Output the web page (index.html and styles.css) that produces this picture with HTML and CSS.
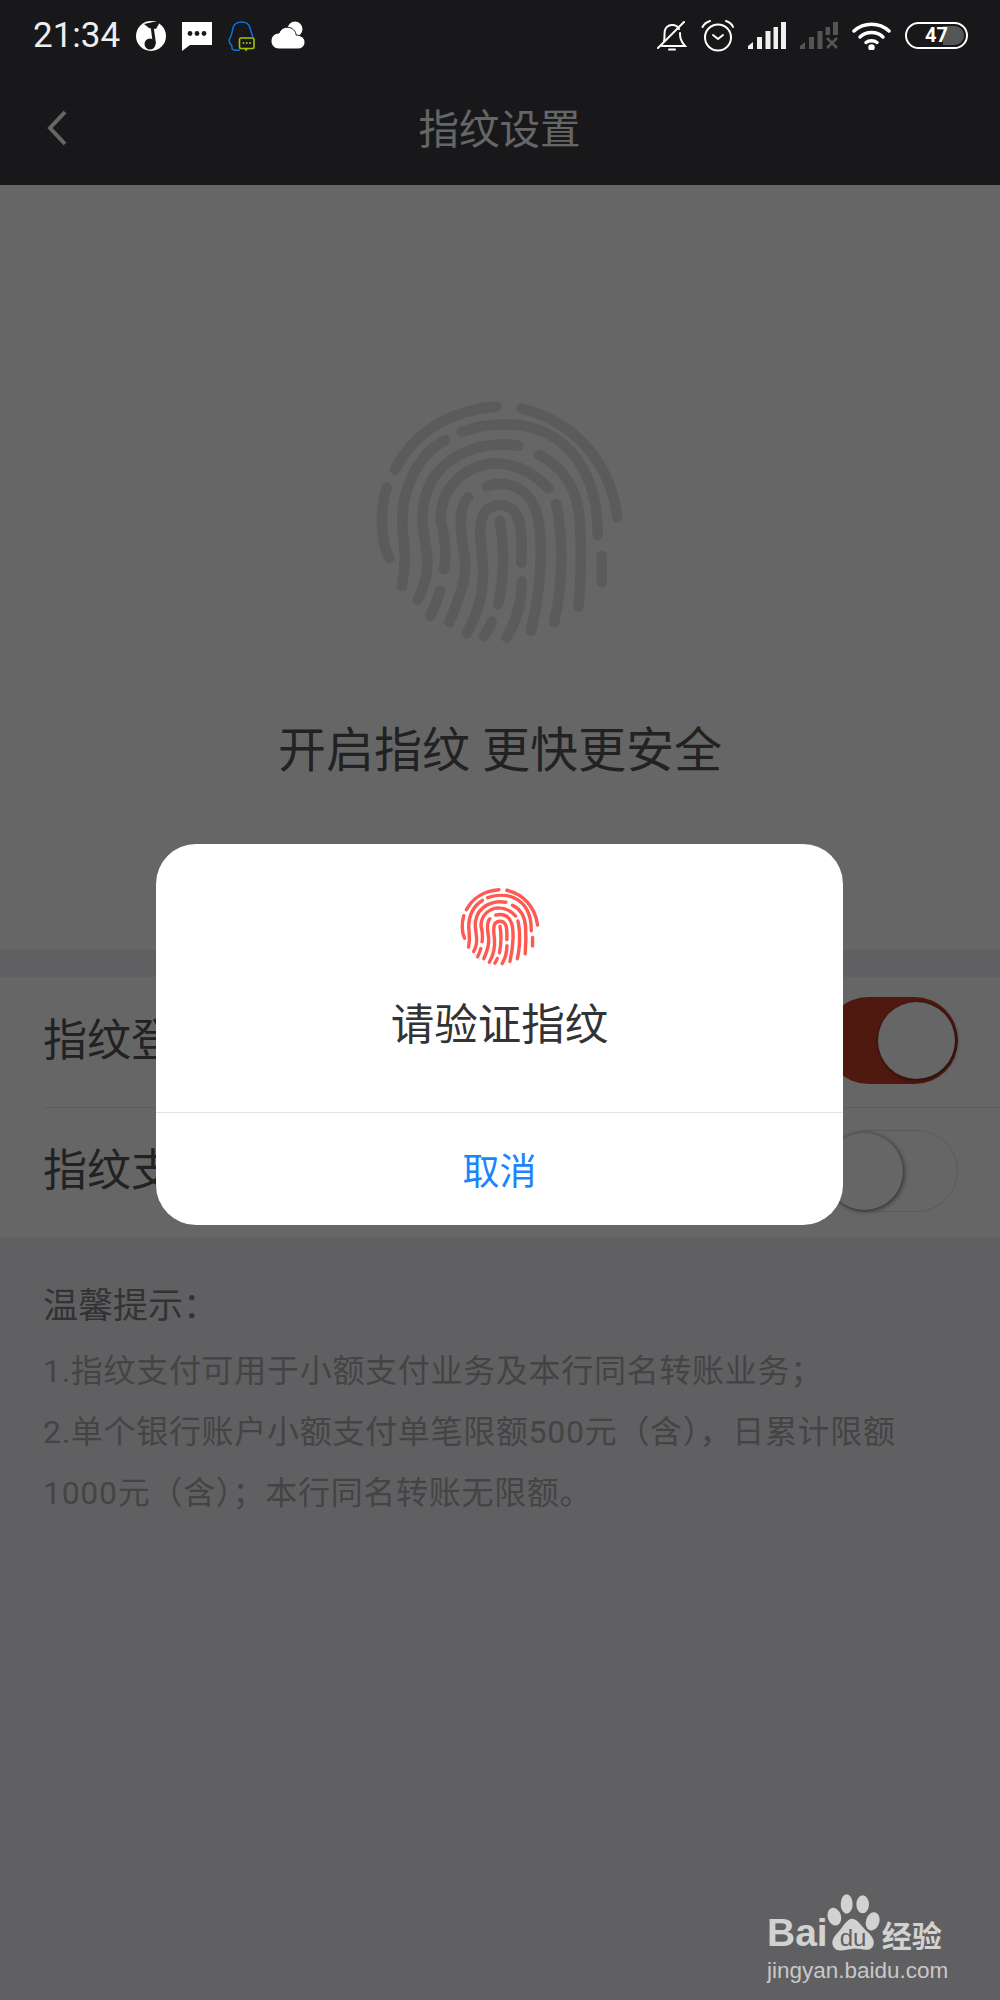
FILE: index.html
```html
<!DOCTYPE html>
<html lang="zh-CN">
<head>
    <meta charset="UTF-8">
    <title>指纹设置</title>
    <link rel="stylesheet" href="styles.css">
</head>
<body>
<svg class="defs" width="0" height="0">
    <symbol id="finger" viewBox="0 0 900 840">
        <g fill="none" stroke="currentColor" stroke-width="32" stroke-linecap="round" stroke-linejoin="round">
            <path d="M135 268C190 160 300 90 440 80"/>
            <path d="M515 85C670 125 780 240 802 412"/>
            <path d="M110 323C90 390 90 480 118 535"/>
            <path d="M335 155C420 125 520 125 590 160C690 210 745 320 743 465"/>
            <path d="M285 180C205 225 155 320 157 430C158 480 175 530 155 618"/>
            <path d="M505 197C430 185 350 200 290 250C235 295 215 360 218 430C222 490 240 520 228 590C222 620 212 640 203 660"/>
            <path d="M567 225C640 260 685 330 690 430C695 520 692 610 686 680"/>
            <path d="M595 325C545 270 490 250 430 250C350 255 270 320 272 420C285 470 290 520 282 568"/>
            <path d="M270 632C262 660 252 685 240 708"/>
            <path d="M410 318C470 300 530 320 555 385C580 450 580 600 543 752"/>
            <path d="M515 605C515 670 495 730 470 772"/>
            <path d="M618 372C640 460 640 620 612 727"/>
            <path d="M355 352C325 380 332 440 336 480C345 530 355 570 330 640C320 675 310 700 298 727"/>
            <path d="M350 760C390 690 405 620 398 540C392 490 385 450 397 410C410 370 480 355 505 415C518 450 515 500 514 548"/>
            <path d="M450 423C460 480 465 570 445 672"/>
            <path d="M425 725C418 742 410 755 402 768"/>
            <path d="M755 528V607"/>
        </g>
    </symbol>
</svg>

<div class="status">
    <div class="status_left">
        <span class="time">21:34</span>
        <svg width="30" height="30" viewBox="0 0 30 30">
            <circle cx="15" cy="15" r="15" fill="#fff"/>
            <path d="M8 3L17 1L24 1L20 8L13 7Z" fill="#18181a"/>
            <path d="M16 5L18.500 23" fill="none" stroke="#18181a" stroke-width="3"/>
            <circle cx="14" cy="23" r="5.500" fill="#18181a"/>
        </svg>
        <svg width="30" height="30" viewBox="0 0 30 30">
            <path d="M0 1H30V24H8L0 30Z" fill="#fff"/>
            <circle cx="8" cy="12.500" r="2.400" fill="#18181a"/>
            <circle cx="15" cy="12.500" r="2.400" fill="#18181a"/>
            <circle cx="22" cy="12.500" r="2.400" fill="#18181a"/>
        </svg>
        <svg width="27" height="32" viewBox="0 0 27 32">
            <path d="M12 30C6 31 3 30 4 26C1 23 0 21 2 18C4 15 4 12 5 8C7 0 20 0 22 8C23 12 24 14 25 17" fill="none" stroke="#0a72e8" stroke-width="1.500"/>
            <rect x="11.500" y="18" width="14.500" height="10.500" rx="1.500" fill="#18181a" stroke="#a4c400" stroke-width="1.600"/>
            <path d="M16 28.500L18 31.500L20 28.500" fill="#a4c400"/>
            <circle cx="15.500" cy="23" r="1" fill="#a4c400"/>
            <circle cx="18.800" cy="23" r="1" fill="#a4c400"/>
            <circle cx="22" cy="23" r="1" fill="#a4c400"/>
        </svg>
        <svg width="34" height="29" viewBox="0 0 34 29">
            <circle cx="24" cy="8" r="7.500" fill="#fff"/>
            <path d="M8 28C3 28 0 24 0 20C0 15 4 12 8 12C10 7 15 5 20 7C24 9 25 12 25 14C30 14 34 17 34 21C34 25 31 28 27 28Z" fill="#fff" stroke="#18181a" stroke-width="1"/>
        </svg>
    </div>
    <div class="status_right">
        <svg width="30" height="30" viewBox="0 0 30 30" fill="none" stroke="#fff" stroke-width="2" stroke-linecap="round">
            <path d="M7 20C8 17 7 12 8 9C10 3 19 2 22 8"/>
            <path d="M23 12C23 16 23 19 28 25H5"/>
            <path d="M12 28.500H18"/>
            <path d="M1 27L27 1"/>
        </svg>
        <svg width="33" height="32" viewBox="0 0 33 32" fill="none" stroke="#fff" stroke-width="2" stroke-linecap="round" stroke-linejoin="round">
            <circle cx="17" cy="17.500" r="13"/>
            <path d="M12 15L17 19L22 15"/>
            <path d="M1.500 7C3 4 6 2 9 1"/>
            <path d="M25 1C28 2 31 4 32 7"/>
        </svg>
        <svg width="38" height="27" viewBox="0 0 38 27" fill="#f0f0f0">
            <path d="M0 27V24L5 20V27Z"/>
            <rect x="9" y="15" width="5" height="12"/>
            <rect x="17.500" y="9" width="5" height="18"/>
            <rect x="25.500" y="5" width="4.500" height="22"/>
            <rect x="33" y="0" width="5" height="27"/>
        </svg>
        <svg width="38" height="27" viewBox="0 0 38 27" fill="#555">
            <path d="M0 27V24L5 20V27Z"/>
            <rect x="9" y="15" width="5" height="12"/>
            <rect x="17.500" y="9" width="5" height="18"/>
            <rect x="25.500" y="5" width="4.500" height="8"/>
            <rect x="33" y="0" width="5" height="13"/>
            <path d="M27 16L37 26M37 16L27 26" stroke="#555" stroke-width="2.500"/>
        </svg>
        <svg width="39" height="28" viewBox="0 0 39 28" fill="none" stroke="#fff" stroke-width="3.500" stroke-linecap="round">
            <path d="M2 9C12 0 27 0 37 9"/>
            <path d="M8 15C14 9 25 9 31 15"/>
            <path d="M14 20.500C17 18 22 18 25 20.500"/>
            <circle cx="19.500" cy="25.500" r="1.500" fill="#fff"/>
        </svg>
        <div class="battery">47</div>
    </div>
</div>

<div class="nav">
    <svg class="back" width="20" height="36" viewBox="0 0 20 36">
        <path d="M18 2L3 18L18 34" fill="none" stroke="#fff" stroke-width="4"/>
    </svg>
    <div class="nav_title">指纹设置</div>
    <div></div>
</div>

<div class="hero">
    <svg class="hero_icon" width="300" height="280"><use href="#finger"/></svg>
    <div class="hero_text">开启指纹 更快更安全</div>
</div>

<div class="band"></div>

<div class="rows">
    <div class="row">
        <span class="row_text">指纹登录</span>
        <div class="switch on"><span class="knob"></span></div>
    </div>
    <div class="row">
        <span class="row_text">指纹支付</span>
        <div class="switch"><span class="knob"></span></div>
    </div>
</div>

<div class="notes">
    <div class="notes_title">温馨提示<span class="pt">：</span></div>
    <p>1.指纹支付可用于小额支付业务及本行同名转账业务；</p>
    <p>2.单个银行账户小额支付单笔限额500元（含），日累计限额1000元（含）；本行同名转账无限额。</p>
</div>

<div class="mask"></div>

<div class="dialog">
    <div class="dialog_top">
        <svg class="dialog_icon" width="96" height="90"><use href="#finger"/></svg>
        <div class="dialog_title">请验证指纹</div>
    </div>
    <div class="dialog_btn">取消</div>
</div>

<div class="mark">
    <div class="mark_top">
        <span class="mark_bai">Bai</span>
        <svg class="mark_paw" width="58" height="60" viewBox="0 0 174 180">
            <ellipse cx="31" cy="68" rx="20" ry="27" transform="rotate(-18 31 68)" fill="#d2d2d2"/>
            <ellipse cx="68" cy="30" rx="18" ry="29" fill="#d2d2d2"/>
            <ellipse cx="116" cy="31" rx="19" ry="27" fill="#d2d2d2"/>
            <ellipse cx="146" cy="82" rx="20" ry="28" transform="rotate(18 146 82)" fill="#d2d2d2"/>
            <path d="M74 78C92 66 106 88 124 108C144 124 156 142 146 158C134 176 108 162 88 164C64 166 40 178 28 158C18 138 36 122 48 108C56 98 62 86 74 78Z" fill="#d2d2d2"/>
            <text x="87" y="156" text-anchor="middle" class="mark_du">du</text>
        </svg>
        <span class="mark_jy">经验</span>
    </div>
    <div class="mark_url">jingyan.baidu.com</div>
</div>
</body>
</html>
```

FILE: styles.css
```css
*{
    margin: 0;
    padding: 0;
    box-sizing: border-box;
}
body{
    position: relative;
    width: 1000px;
    height: 2000px;
    overflow: hidden;
    background-color: #f0f0f5;
    font-family: Roboto, "Noto Sans CJK SC", sans-serif;
}
.defs{
    position: absolute;
}

/* status bar sits above the mask */
.status{
    position: relative;
    z-index: 2;
    height: 64px;
    padding: 7px 32px 0 33px;
    display: flex;
    justify-content: space-between;
    align-items: center;
    background-color: #18181a;
}
.status_left{
    display: flex;
    align-items: center;
    gap: 16px;
}
.status_right{
    display: flex;
    align-items: center;
    gap: 14px;
}
.time{
    color: #eeeeee;
    font-size: 35px;
    line-height: 40px;
}
.battery{
    width: 63px;
    height: 27px;
    padding: 2px;
    border: 2px solid #ffffff;
    border-radius: 14px;
    color: #ffffff;
    font-size: 20px;
    font-weight: 700;
    line-height: 19px;
    text-align: center;
    background: linear-gradient(90deg, transparent 62%, #555555 62%) content-box;
}

.nav{
    height: 121px;
    padding: 10px 0 0 47px;
    display: grid;
    grid-template-columns: 1fr auto 1fr;
    align-items: center;
    background-color: #3c3c41;
}
.back{
    margin-bottom: 4px;
}
.nav_title{
    color: #ffffff;
    font-size: 40.500px;
    line-height: 50px;
    transform: translateX(-24px);
}

.hero{
    height: 765px;
    padding-top: 195px;
    display: flex;
    flex-direction: column;
    align-items: center;
    background-color: #ffffff;
}
.hero_icon{
    color: #e4e4e4;
}
.hero_text{
    margin-top: 61px;
    color: #555555;
    font-size: 48px;
    line-height: 60px;
}

.band{
    height: 27px;
}

.rows{
    background-color: #ffffff;
}
.row{
    height: 130px;
    margin-left: 43px;
    padding: 0 42px 3px 0;
    display: flex;
    justify-content: space-between;
    align-items: center;
    color: #555555;
    font-size: 44px;
}
.row + .row{
    border-top: 1px solid #e6e6e6;
}
.row_text{
    margin-bottom: 8px;
}
.switch{
    width: 133px;
    height: 82px;
    border: 1px solid #e0e0e0;
    border-radius: 41px;
    display: flex;
    align-items: center;
    background-color: #ffffff;
}
.switch.on{
    height: 87px;
    padding-right: 3px;
    border: none;
    border-radius: 44px;
    justify-content: flex-end;
    background-color: #c8402a;
}
.knob{
    width: 77px;
    height: 77px;
    border-radius: 50%;
    background-color: #ffffff;
    box-shadow: 1px 1px 5px rgba(0, 0, 0, 0.6);
}

.notes{
    padding: 36px 90px 0 43px;
    color: #aaaaaa;
    font-size: 32px;
    letter-spacing: 0.7px;
    line-height: 61px;
}
.notes_title{
    margin-bottom: 4px;
    color: #808080;
    font-size: 35px;
    line-height: 60px;
    letter-spacing: 0;
}
.pt{
    font-family: "Noto Sans CJK TC", sans-serif;
}

.mask{
    position: absolute;
    left: 0;
    top: 0;
    width: 100%;
    height: 100%;
    z-index: 1;
    background-color: rgba(0, 0, 0, 0.6);
}

.dialog{
    position: absolute;
    left: 156px;
    top: 844px;
    z-index: 3;
    width: 687px;
    height: 381px;
    border-radius: 40px;
    display: flex;
    flex-direction: column;
    background-color: #ffffff;
}
.dialog_top{
    height: 269px;
    padding-top: 37px;
    display: flex;
    flex-direction: column;
    align-items: center;
    border-bottom: 1px solid #e5e5e5;
}
.dialog_icon{
    color: #ff5a52;
}
.dialog_title{
    margin-top: 25px;
    color: #333333;
    font-size: 43.500px;
    line-height: 60px;
}
.dialog_btn{
    flex: 1;
    display: flex;
    justify-content: center;
    align-items: center;
    color: #1a85ff;
    font-size: 37px;
}

.mark{
    position: absolute;
    left: 767px;
    top: 1893px;
    z-index: 4;
    width: 190px;
    color: #d2d2d2;
}
.mark_top{
    display: flex;
    align-items: flex-end;
    height: 60px;
}
.mark_bai{
    margin-bottom: -5px;
    font-family: "Liberation Sans", sans-serif;
    font-size: 39px;
    font-weight: 700;
    line-height: 50px;
}
.mark_paw{
    margin: 0 0 -1px -4px;
}
.mark_du{
    font-family: "Liberation Sans", sans-serif;
    font-size: 72px;
    fill: #5f5f62;
}
.mark_jy{
    margin-bottom: 1px;
    font-family: "Noto Sans CJK SC", sans-serif;
    font-size: 30px;
    font-weight: 700;
    line-height: 36px;
}
.mark_url{
    margin-top: 3px;
    color: #c8c8c8;
    font-family: "Liberation Sans", sans-serif;
    font-size: 22.500px;
    line-height: 30px;
}
```
